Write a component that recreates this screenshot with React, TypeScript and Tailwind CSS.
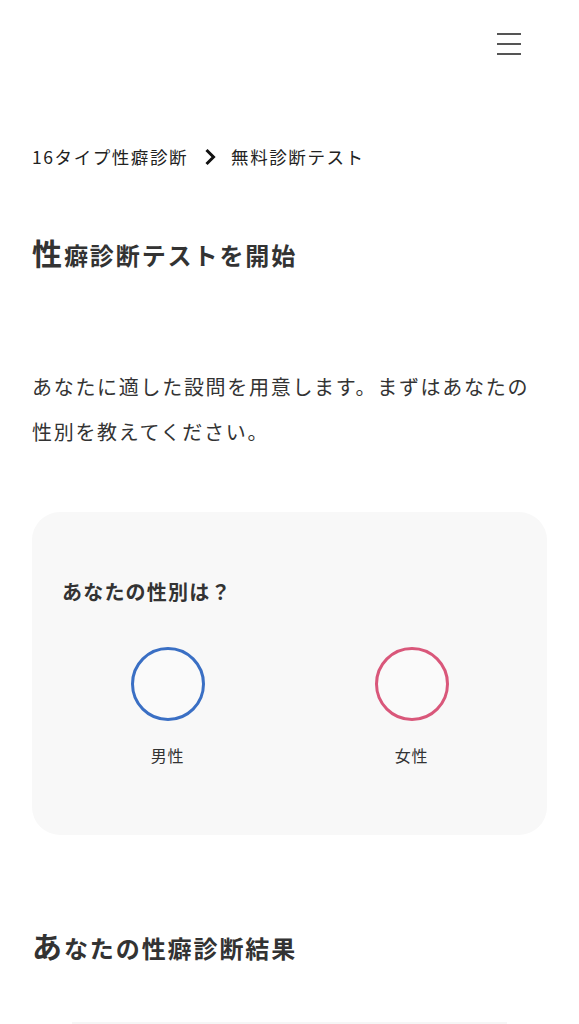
import React from "react";

const font = {
  fontFamily: '"Noto Sans CJK JP", "Noto Sans", sans-serif',
};

function Hamburger() {
  return (
    <button className="flex flex-col gap-[8.5px] w-[24px]" aria-label="menu">
      <span className="block h-[1.5px] w-full bg-[#555]" />
      <span className="block h-[1.5px] w-full bg-[#555]" />
      <span className="block h-[1.5px] w-full bg-[#555]" />
    </button>
  );
}

function Chevron() {
  return (
    <svg width="12" height="18" viewBox="0 0 12 18" fill="none">
      <path d="M2.5 2 L9.5 9 L2.5 16" stroke="#111" strokeWidth="3" strokeLinejoin="miter" />
    </svg>
  );
}

function Choice({ label, color }: { label: string; color: string }) {
  return (
    <div className="flex flex-col items-center">
      <div className={`w-[74px] h-[74px] rounded-full border-[3px] ${color} bg-[#fafafa]`} />
      <span className="mt-[26px] text-[16px] tracking-[0.04em] text-[#333] leading-none">{label}</span>
    </div>
  );
}

export default function App() {
  return (
    <div className="min-h-screen bg-white text-[#333]" style={font}>
      <header className="h-[88px] flex justify-end items-start pt-[33px] pr-[58px]">
        <Hamburger />
      </header>

      <main className="px-[32px]">
        <nav className="mt-[60px] flex items-center text-[17.5px] tracking-[0.09em] leading-none text-[#222]">
          <span>16タイプ性癖診断</span>
          <span className="ml-[16px] mr-[15px] flex items-center">
            <Chevron />
          </span>
          <span>無料診断テスト</span>
        </nav>

        <h1 className="mt-[71px] text-[24px] font-bold tracking-[0.08em] leading-none text-[#333] first-letter:text-[30px]">
          性癖診断テストを開始
        </h1>

        <p className="mt-[97px] text-[20px] tracking-[0.085em] leading-[45px] text-[#333]">
          あなたに適した設問を用意します。まずはあなたの性別を教えてください。
        </p>

        <section className="mt-[58px] bg-[#f8f8f8] rounded-[28px] px-[30px] pt-[70px] pb-[72px]">
          <h2 className="text-[20px] font-bold tracking-[0.06em] leading-none text-[#333]">
            あなたの性別は？
          </h2>
          <div className="mt-[45px] flex justify-center gap-[170px]">
            <Choice label="男性" color="border-[#3a6fc4]" />
            <Choice label="女性" color="border-[#d9577a]" />
          </div>
        </section>

        <h2 className="mt-[95px] text-[24px] font-bold tracking-[0.08em] leading-none text-[#333] first-letter:text-[30px]">
          あなたの性癖診断結果
        </h2>

        <div className="mt-[62px] mx-[40px] h-[2px] bg-[#f6f6f6]" />
      </main>
    </div>
  );
}
